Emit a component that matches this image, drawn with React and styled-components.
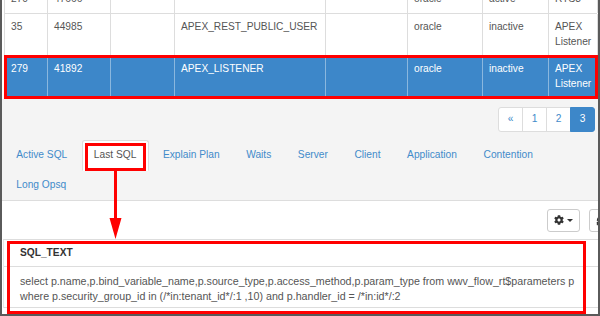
import React from 'react';
import styled, { createGlobalStyle } from 'styled-components';
import { FaCog } from 'react-icons/fa';
import { RefreshCw } from 'lucide-react';

const Global = createGlobalStyle`
  html, body { margin: 0; padding: 0; background: #fff; }
  body {
    font-family: "Liberation Sans", Arial, sans-serif;
    font-size: 10.2px;
    line-height: 14.8px;
    color: #555;
  }
  * { box-sizing: border-box; }
`;

const Frame = styled.div`
  position: relative;
  width: 600px;
  height: 316px;
  border: 2px solid #5a5a5a;
  border-top: none;
  overflow: hidden;
  display: flex;
  flex-direction: column;
  background: #fff;
`;

const DataTable = styled.div`
  margin: -14px 1px 0 2px;
  border-left: 1px solid #ddd;
  background: #fff;
`;

const COLS = '43px 63px 64px 151px 82px 75px 66px 49px';

const Row = styled.div`
  position: relative;
  display: grid;
  grid-template-columns: ${COLS};
  border-bottom: 1px solid #ddd;
  background: ${(p) => (p.$selected ? '#3d87c9' : '#fff')};
  color: ${(p) => (p.$selected ? '#fff' : '#555')};
  ${(p) =>
    p.$selected &&
    `
    &::after {
      content: '';
      position: absolute;
      top: -1px; left: -1px; right: -1px; bottom: -1px;
      border: 3px solid #f00;
      pointer-events: none;
    }
  `}
`;

const Cell = styled.div`
  padding: 6px 1px 6px 6px;
  border-right: 1px solid ${(p) => (p.$selected ? 'rgba(255,255,255,0.4)' : '#ddd')};
  white-space: ${(p) => (p.$nowrap ? 'nowrap' : 'normal')};
  overflow: hidden;
`;

const GraySection = styled.div`
  background: #f4f4f4;
  padding: 8px 0 0 0;
`;

const PagerRow = styled.div`
  display: flex;
  justify-content: flex-end;
  padding-right: 3px;
`;

const Pager = styled.ul`
  display: flex;
  list-style: none;
  margin: 0;
  padding: 0;
`;

const PageItem = styled.li`
  width: 25px;
  height: 25px;
  margin-left: -1px;
  display: flex;
  align-items: center;
  justify-content: center;
  border: 1px solid ${(p) => (p.$active ? '#3d87c9' : '#ddd')};
  background: ${(p) => (p.$active ? '#3d87c9' : '#fff')};
  color: ${(p) => (p.$active ? '#fff' : '#428bca')};
  &:first-child { border-radius: 3px 0 0 3px; margin-left: 0; }
  &:last-child { border-radius: 0 3px 3px 0; }
`;

const Tabs = styled.ul`
  display: flex;
  flex-wrap: wrap;
  list-style: none;
  margin: 8px 0 0 0;
  padding: 0 0 0 2px;
  border-bottom: 1px solid #ddd;
`;

const Tab = styled.li`
  position: relative;
  padding: 7px 11.3px;
  margin: 0 2px -1px 0;
  border: 1px solid ${(p) => (p.$active ? '#ddd' : 'transparent')};
  border-bottom-color: transparent;
  border-radius: 3px 3px 0 0;
  background: ${(p) => (p.$active ? '#fff' : 'transparent')};
  color: ${(p) => (p.$active ? '#555' : '#428bca')};
  white-space: nowrap;
  ${(p) =>
    p.$marked &&
    `
    &::after {
      content: '';
      position: absolute;
      top: 2px; left: 2px; right: 2px; bottom: -1px;
      border: 3px solid #f00;
      pointer-events: none;
    }
  `}
`;

const WhiteSection = styled.div`
  flex: 1;
  display: flex;
  flex-direction: column;
  background: #fff;
`;

const Toolbar = styled.div`
  display: flex;
  justify-content: flex-end;
  gap: 9px;
  padding-top: 8px;
  margin-right: -24px;
`;

const ToolButton = styled.div`
  width: 33px;
  height: 23px;
  border: 1px solid #ccc;
  border-radius: 3px;
  background: #fff;
  display: flex;
  align-items: center;
  justify-content: ${(p) => (p.$left ? 'flex-start' : 'center')};
  padding-left: ${(p) => (p.$left ? '6px' : '0')};
  gap: 3px;
  color: #333;
`;

const Caret = styled.span`
  width: 0;
  height: 0;
  border-left: 3px solid transparent;
  border-right: 3px solid transparent;
  border-top: 3px solid #333;
`;

const SqlTable = styled.div`
  position: relative;
  margin: 7px 0 0 1px;
  border-top: 1px solid #ddd;
  border-left: 1px solid #e6e6e6;
  &::after {
    content: '';
    position: absolute;
    top: 1px; left: 3px; right: 12px; bottom: -6px;
    border: 3px solid #f00;
    pointer-events: none;
  }
`;

const SqlHead = styled.div`
  padding: 6px 8px 6px 16px;
  font-weight: bold;
  color: #333;
  border-bottom: 1px solid #ddd;
`;

const SqlBody = styled.div`
  padding: 7px 8px 3px 16px;
  border-bottom: 1px solid #ddd;
  white-space: pre-line;
  font-size: 10.7px;
`;

const Arrow = styled.svg`
  position: absolute;
  left: 106px;
  top: 171px;
  pointer-events: none;
`;

const rows = [
  { cells: ['270', '47666', '', '', '', 'oracle', 'active', 'RTS3'] },
  { cells: ['35', '44985', '', 'APEX_REST_PUBLIC_USER', '', 'oracle', 'inactive', 'APEX Listener'] },
  { cells: ['279', '41892', '', 'APEX_LISTENER', '', 'oracle', 'inactive', 'APEX Listener'], selected: true },
];

const tabs = ['Active SQL', 'Last SQL', 'Explain Plan', 'Waits', 'Server', 'Client', 'Application', 'Contention', 'Long Opsq'];

const sql =
  'select p.name,p.bind_variable_name,p.source_type,p.access_method,p.param_type from wwv_flow_rt$parameters p\n' +
  'where p.security_group_id in (/*in:tenant_id*/:1 ,10) and p.handler_id = /*in:id*/:2';

export default function App() {
  return (
    <>
      <Global />
      <Frame>
        <DataTable>
          {rows.map((r, i) => (
            <Row key={i} $selected={r.selected}>
              {r.cells.map((c, j) => (
                <Cell key={j} $selected={r.selected} $nowrap={j !== 7}>
                  {c}
                </Cell>
              ))}
            </Row>
          ))}
        </DataTable>
        <GraySection>
          <PagerRow>
            <Pager>
              <PageItem>«</PageItem>
              <PageItem>1</PageItem>
              <PageItem>2</PageItem>
              <PageItem $active>3</PageItem>
            </Pager>
          </PagerRow>
          <Tabs>
            {tabs.map((t) => (
              <Tab key={t} $active={t === 'Last SQL'} $marked={t === 'Last SQL'}>
                {t}
              </Tab>
            ))}
          </Tabs>
        </GraySection>
        <WhiteSection>
          <Toolbar>
            <ToolButton>
              <FaCog size={10} />
              <Caret />
            </ToolButton>
            <ToolButton $left>
              <RefreshCw size={11} strokeWidth={2.5} />
            </ToolButton>
          </Toolbar>
          <SqlTable>
            <SqlHead>SQL_TEXT</SqlHead>
            <SqlBody>{sql}</SqlBody>
          </SqlTable>
        </WhiteSection>
        <Arrow width="16" height="70" viewBox="0 0 16 70">
          <rect x="6" y="0" width="3" height="49" fill="#f00" />
          <polygon points="1.5,47 13.5,47 7.5,68" fill="#f00" />
        </Arrow>
      </Frame>
    </>
  );
}
